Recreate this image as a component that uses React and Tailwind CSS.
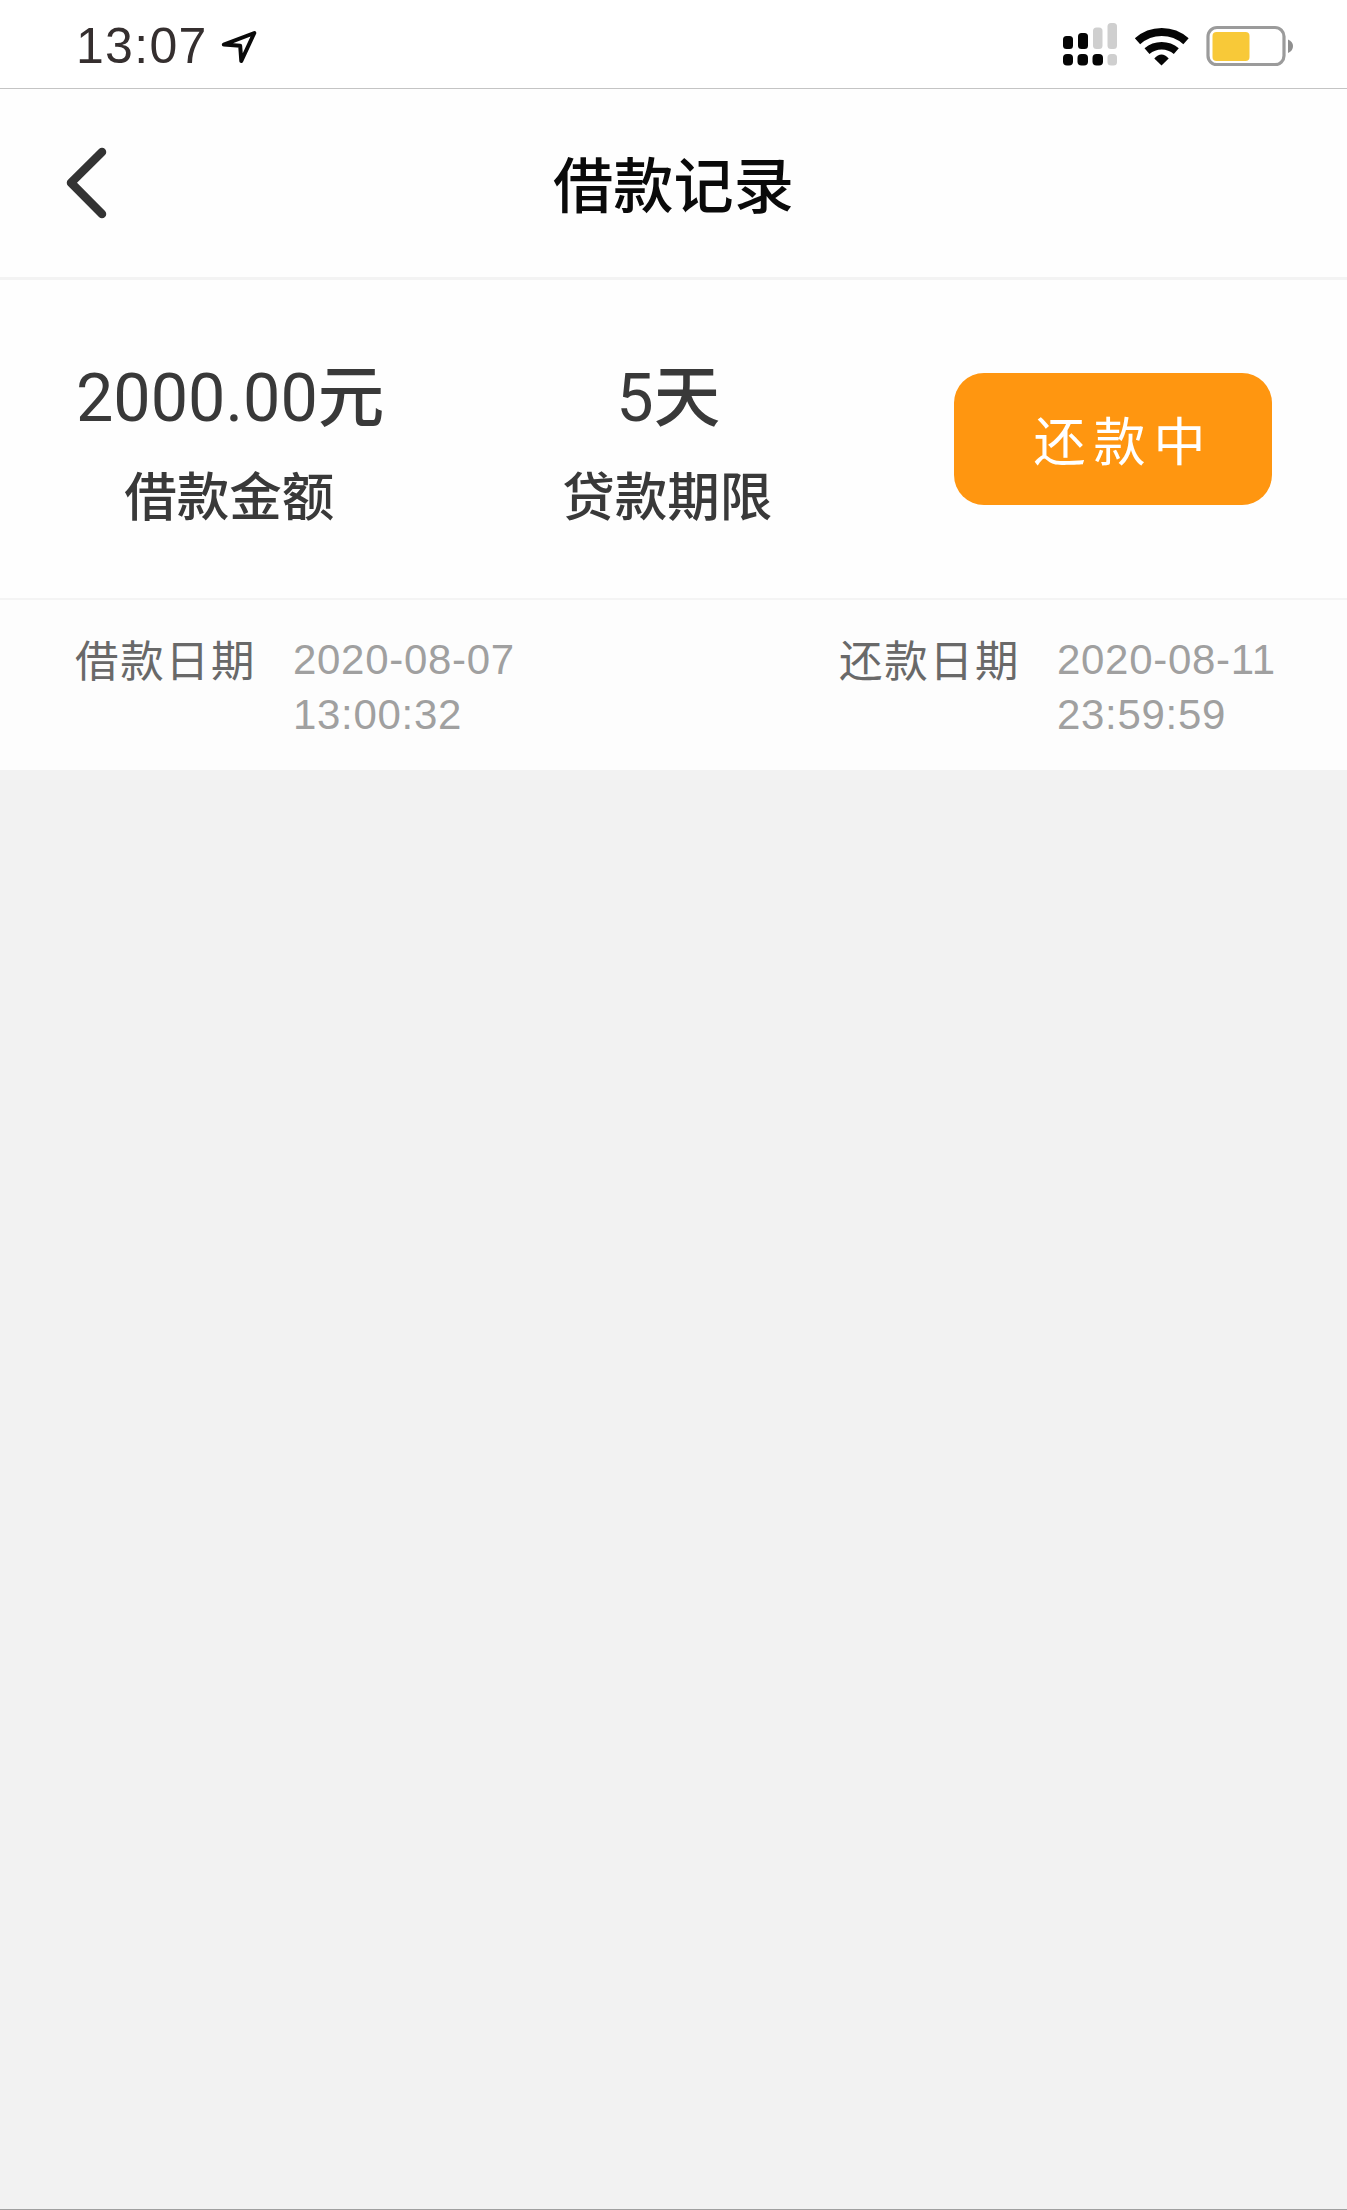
const CJK = "font-['Noto_Sans_CJK_SC',sans-serif]";

function LocationIcon() {
  return (
    <svg className="mt-[26px] ml-[14px] h-[42px] w-[42px]" viewBox="218 26 42 42" fill="none">
      <path d="M223.8 44.6 L254.3 33 L241.3 61 L240.2 45.8 Z" stroke="#0a0a0a" strokeWidth="4" strokeLinejoin="round" />
    </svg>
  );
}

function SignalIcon() {
  return (
    <svg className="h-[44px] w-[56px]" viewBox="1062 22 56 44">
      <g fill="#050505">
        <rect x="1063" y="36" width="10" height="13" rx="3.5" />
        <rect x="1078" y="33" width="10" height="16" rx="3.5" />
        <rect x="1063" y="54" width="10" height="11.5" rx="4" />
        <rect x="1077.5" y="54" width="10.5" height="11.5" rx="4" />
        <rect x="1092.5" y="54" width="10.5" height="11.5" rx="4" />
      </g>
      <g fill="#cfcfcf">
        <rect x="1093" y="27.5" width="9.5" height="21.5" rx="3.5" />
        <rect x="1107.5" y="23" width="9.5" height="26" rx="3.5" />
        <rect x="1107.5" y="54" width="9.5" height="11.5" rx="3.5" />
      </g>
    </svg>
  );
}

function WifiIcon() {
  return (
    <svg className="ml-[15px] h-[44px] w-[58px]" viewBox="1133 22 58 44" fill="none">
      <path d="M1137.5 41.2 A36.5 36.5 0 0 1 1186 41.2" stroke="#050505" strokeWidth="8" />
      <path d="M1147 51.2 A22.5 22.5 0 0 1 1176.3 51.2" stroke="#050505" strokeWidth="7.6" />
      <path d="M1154.3 58.4 Q1161.5 50.6 1168.7 58.4 L1161.5 65.6 Z" fill="#050505" />
    </svg>
  );
}

function BatteryIcon() {
  return (
    <svg className="ml-[14px] h-[44px] w-[90px]" viewBox="1205 22 90 44">
      <rect x="1208" y="27.5" width="76" height="37.2" rx="9" fill="#fff" stroke="#9b9b9b" strokeWidth="3.2" />
      <rect x="1212.5" y="32" width="37" height="29" rx="4" fill="#f8c938" />
      <path d="M1288 39.5 Q1293 41.5 1293 46 Q1293 50.8 1288 53 Z" fill="#8f8f8f" />
    </svg>
  );
}

function Stat({ value, label }) {
  return (
    <div className="flex flex-col items-center whitespace-nowrap text-[#393939]">
      <div className="pl-[2px] font-[Roboto,'Noto_Sans_CJK_SC',sans-serif] text-[66.5px] leading-[66px]">
        {value[0]}
        <span className="font-medium">{value[1]}</span>
      </div>
      <div className={`${CJK} mt-[36px] text-[52.5px] leading-[52px] font-medium`}>{label}</div>
    </div>
  );
}

function DateItem({ label, date, time }) {
  return (
    <div className="flex whitespace-nowrap">
      <div className={`${CJK} mt-[5px] w-[219px] pl-[1px] text-[43.5px] leading-[44px] tracking-[1.8px] text-[#696969]`}>{label}</div>
      <div className="font-['Liberation_Sans',sans-serif] text-[42px] leading-[55px] tracking-[0.7px] text-[#a0a0a0]">
        <div>{date}</div>
        <div>{time}</div>
      </div>
    </div>
  );
}

export default function App() {
  return (
    <div className="flex h-[2210px] w-[1347px] flex-col overflow-hidden border-b border-[#a0a0a0] bg-[#f2f2f2]">
      <div className="flex h-[88px] shrink-0 items-start justify-between bg-white pr-[52px] pl-[76px]">
        <div className="flex">
          <span className="mt-[21px] w-[128px] font-['Liberation_Sans',sans-serif] text-[50px] leading-[50px] tracking-[1.3px] text-[#352f2f]">
            13:07
          </span>
          <LocationIcon />
        </div>
        <div className="flex pt-[22px]">
          <SignalIcon />
          <WifiIcon />
          <BatteryIcon />
        </div>
      </div>
      <header className="grid h-[192px] shrink-0 grid-cols-[1fr_auto_1fr] items-start border-t border-b-[3px] border-t-[#c4c4c4] border-b-[#f3f3f3] bg-[#fefefe]">
        <svg className="mt-[56px] ml-[64px] h-[76px] w-[46px]" viewBox="64 145 46 76" fill="none">
          <path d="M102 152 L71 182.7 L102 214" stroke="#333" strokeWidth="8.5" strokeLinecap="round" strokeLinejoin="round" />
        </svg>
        <h1 className={`${CJK} mt-[63px] text-[60.2px] leading-[60px] font-medium text-[#0a0a0a]`}>借款记录</h1>
      </header>
      <section className="flex h-[320px] shrink-0 items-start border-b-2 border-[#f4f4f4] bg-[#fefefe] pl-[74px]">
        <div className="flex pt-[85px]">
          <Stat value={["2000.00", "元"]} label="借款金额" />
          <div className="ml-[178px]">
            <Stat value={["5", "天"]} label="贷款期限" />
          </div>
        </div>
        <button className={`${CJK} mt-[93px] mr-[75px] ml-auto h-[132px] w-[318px] rounded-[30px] bg-[#ff9610] pb-[1px] pl-[21px] text-[52px] leading-[52px] tracking-[8px] text-white`}>
          还款中
        </button>
      </section>
      <section className="flex h-[170px] shrink-0 bg-[#fdfdfd] pt-[32px] pl-[74px]">
        <div className="w-[764px]">
          <DateItem label="借款日期" date="2020-08-07" time="13:00:32" />
        </div>
        <DateItem label="还款日期" date="2020-08-11" time="23:59:59" />
      </section>
    </div>
  );
}
